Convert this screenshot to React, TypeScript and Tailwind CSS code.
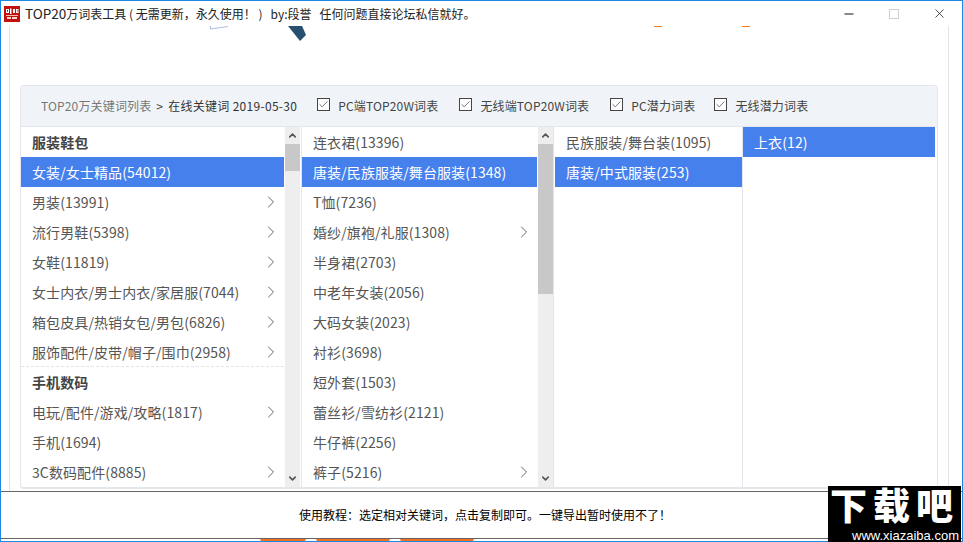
import { ChevronRight, ChevronUp, ChevronDown, Check, X, Minus } from 'lucide-react';

const cjk = '[font-family:"Noto_Sans_CJK_SC","Noto_Sans",sans-serif]';

interface Row {
  label: string;
  more?: boolean;
  active?: boolean;
  head?: boolean;
  dashed?: boolean;
}

const COL1: Row[] = [
  { label: '服装鞋包', head: true },
  { label: '女装/女士精品(54012)', active: true },
  { label: '男装(13991)', more: true },
  { label: '流行男鞋(5398)', more: true },
  { label: '女鞋(11819)', more: true },
  { label: '女士内衣/男士内衣/家居服(7044)', more: true },
  { label: '箱包皮具/热销女包/男包(6826)', more: true },
  { label: '服饰配件/皮带/帽子/围巾(2958)', more: true, dashed: true },
  { label: '手机数码', head: true },
  { label: '电玩/配件/游戏/攻略(1817)', more: true },
  { label: '手机(1694)' },
  { label: '3C数码配件(8885)', more: true },
];

const COL2: Row[] = [
  { label: '连衣裙(13396)' },
  { label: '唐装/民族服装/舞台服装(1348)', active: true },
  { label: 'T恤(7236)' },
  { label: '婚纱/旗袍/礼服(1308)', more: true },
  { label: '半身裙(2703)' },
  { label: '中老年女装(2056)' },
  { label: '大码女装(2023)' },
  { label: '衬衫(3698)' },
  { label: '短外套(1503)' },
  { label: '蕾丝衫/雪纺衫(2121)' },
  { label: '牛仔裤(2256)' },
  { label: '裤子(5216)', more: true },
];

const COL3: Row[] = [
  { label: '民族服装/舞台装(1095)' },
  { label: '唐装/中式服装(253)', active: true },
];

const COL4: Row[] = [{ label: '上衣(12)', active: true }];

const CHECKS = [
  { label: 'PC端TOP20W词表', gap: 'mr-[21px]' },
  { label: '无线端TOP20W词表', gap: 'mr-[21px]' },
  { label: 'PC潜力词表', gap: 'mr-[19px]' },
  { label: '无线潜力词表', gap: '' },
];

function ListRow({ row }: { row: Row }) {
  const tone = row.active
    ? 'bg-[#4680ed] text-white'
    : row.head
      ? 'font-bold text-[#444]'
      : 'text-[#555]';
  return (
    <div
      className={`relative flex h-[30px] shrink-0 items-center justify-between pl-[11px] pr-[3px] text-[14px] leading-[30px] tracking-[0.1px] ${tone}`}
    >
      <span className="whitespace-nowrap">{row.label}</span>
      {row.more && <ChevronRight size={20} strokeWidth={1.2} className="text-[#666]" />}
      {row.dashed && <div className="absolute inset-x-0 bottom-0 border-b border-dashed border-[#e4e4e4]" />}
    </div>
  );
}

function Scrollbar({ thumb }: { thumb: string }) {
  return (
    <div className="ml-[1px] flex w-[15px] shrink-0 flex-col items-center bg-[#eeeeee]">
      <div className="flex h-[17px] shrink-0 items-center justify-center">
        <ChevronUp size={11} strokeWidth={3.5} className="text-[#555]" />
      </div>
      <div className={`w-full shrink-0 bg-[#c8c8c8] ${thumb}`} />
      <div className="flex-1" />
      <div className="flex h-[17px] shrink-0 items-center justify-center">
        <ChevronDown size={11} strokeWidth={3.5} className="text-[#555]" />
      </div>
    </div>
  );
}

function AppIcon() {
  return (
    <svg width="16" height="16" viewBox="0 0 16 16" className="shrink-0">
      <rect width="16" height="16" fill="#c4100c" />
      <path d="M2 3h3v4H2zM6 2.5h1.5V8H6zM9 3h2v4H9zM12 3h2.5v4H12z" fill="#fff" />
      <path d="M3 3.8h1v2H3zM13 3.8h.6v2H13z" fill="#c4100c" />
      <path d="M2 9h12v1H2z" fill="#f3b9b0" />
      <path d="M3 11h4v2H3zM8 11h5v2H8z" fill="#f7d5cf" />
    </svg>
  );
}

export default function App() {
  return (
    <div className={`relative flex h-[542px] w-[963px] flex-col overflow-hidden border-x-[1px] border-t-[1px] border-[#1e88e5] bg-white ${cjk}`}>
      {/* Title bar */}
      <div className="flex h-[25px] shrink-0 items-center pl-[3px] text-[#222]">
        <AppIcon />
        <span className="ml-[5px] whitespace-pre text-[12px]">
          <span className="text-[13.5px]">TOP20</span>万词表工具 ( 无需更新，永久使用！ )   by:段誉   任何问题直接论坛私信就好。
        </span>
        <div className="ml-auto flex items-center pr-[15px]">
          <Minus size={14} strokeWidth={1.6} className="mr-[33px] text-black" />
          <div className="mr-[33px] h-[10px] w-[10px] border border-[#cfcfcf]" />
          <X size={15} strokeWidth={1.1} className="text-black" />
        </div>
      </div>

      {/* Page inside the window */}
      <div className="relative ml-[8px] mr-[13px] flex h-[465px] shrink-0 flex-col border-x border-[#e3e3e3] px-[10px] pt-[59px]">
        {/* Clipped bits of the page's banner */}
        <svg width="18" height="4" viewBox="0 0 18 4" className="absolute left-[200px] top-0">
          <polyline points="0.5,0 0.5,3 18,0.5" fill="none" stroke="#a9bfe6" strokeWidth="1" />
        </svg>
        <div className="absolute left-[278px] top-0 h-[15px] w-[18px] bg-[#27506f] [clip-path:polygon(0_0,78%_0,100%_60%,67%_100%)]" />
        <div className="absolute left-[644px] top-0 h-px w-[8px] bg-[#f57a1c]" />
        <div className="absolute left-[732px] top-0 h-px w-[8px] bg-[#f57a1c]" />

        {/* Keyword panel */}
        <div className="flex h-[404px] flex-col overflow-hidden rounded-[4px] border border-b-2 border-[#e3e6ea] bg-white">
          <div className="flex h-[41px] shrink-0 items-center whitespace-nowrap border-b border-[#e3e6ea] bg-[#f0f4f8] pl-[20px] text-[12px] tracking-[0.15px]">
            <span className="text-[#777]">TOP20万关键词列表</span>
            <span className="mx-[5px] text-[#444]">&gt;</span>
            <span className="tracking-[0.3px] text-[#333]">在线关键词 2019-05-30</span>
            <div className="ml-[20px] flex items-center">
              {CHECKS.map((c) => (
                <label key={c.label} className={`flex items-center text-[#444] ${c.gap}`}>
                  <span className="mr-[8px] mt-[-3px] flex h-[13px] w-[13px] items-center justify-center border border-[#444] bg-white">
                    <Check size={11} strokeWidth={1.6} className="text-[#444]" />
                  </span>
                  {c.label}
                </label>
              ))}
            </div>
          </div>

          <div className="flex min-h-0 flex-1">
            <div className="flex w-[281px] shrink-0 border-r border-[#e3e6ea] pr-[1px]">
              <div className="flex min-w-0 flex-1 flex-col overflow-hidden">
                {COL1.map((r) => <ListRow key={r.label} row={r} />)}
              </div>
              <Scrollbar thumb="h-[27px]" />
            </div>
            <div className="flex w-[251px] shrink-0">
              <div className="flex min-w-0 flex-1 flex-col overflow-hidden">
                {COL2.map((r) => <ListRow key={r.label} row={r} />)}
              </div>
              <Scrollbar thumb="h-[150px]" />
            </div>
            <div className="flex w-[190px] shrink-0 flex-col border-x border-[#e3e6ea] pl-[1px]">
              {COL3.map((r) => <ListRow key={r.label} row={r} />)}
            </div>
            <div className="flex w-[192px] shrink-0 flex-col">
              {COL4.map((r) => <ListRow key={r.label} row={r} />)}
            </div>
          </div>
        </div>
      </div>

      {/* Tutorial strip */}
      <div className="flex h-[47px] shrink-0 items-center justify-center border-t border-[#666] pl-[7px] text-[12px] text-black">
        <span className="whitespace-nowrap">使用教程：选定相对关键词，点击复制即可。一键导出暂时使用不了！</span>
      </div>

      {/* Buttons cut off by the bottom edge */}
      <div className="flex h-[3px] shrink-0 gap-[10px] border-t border-[#666] pl-[259px]">
        <div className="h-[2px] w-[46px] rounded-b-[3px] bg-[#f0701e]" />
        <div className="h-[2px] w-[74px] rounded-b-[3px] bg-[#f0701e]" />
        <div className="h-[2px] w-[74px] rounded-b-[3px] bg-[#f0701e]" />
      </div>
      <div className="h-px shrink-0 bg-[#1e88e5]" />

      {/* Site watermark */}
      <div className="absolute bottom-0 right-[1px] flex h-[56px] w-[133px] flex-col items-center overflow-hidden bg-black text-white">
        <span className="h-[43px] whitespace-nowrap text-[37px] font-black leading-[43px] tracking-[6px] [font-family:'Liberation_Sans','Noto_Sans_CJK_SC',sans-serif]">下载吧</span>
        <span className="self-end pr-[2px] text-[13px] leading-[13px] [font-family:'Liberation_Sans',sans-serif]">www.xiazaiba.com</span>
      </div>
    </div>
  );
}
